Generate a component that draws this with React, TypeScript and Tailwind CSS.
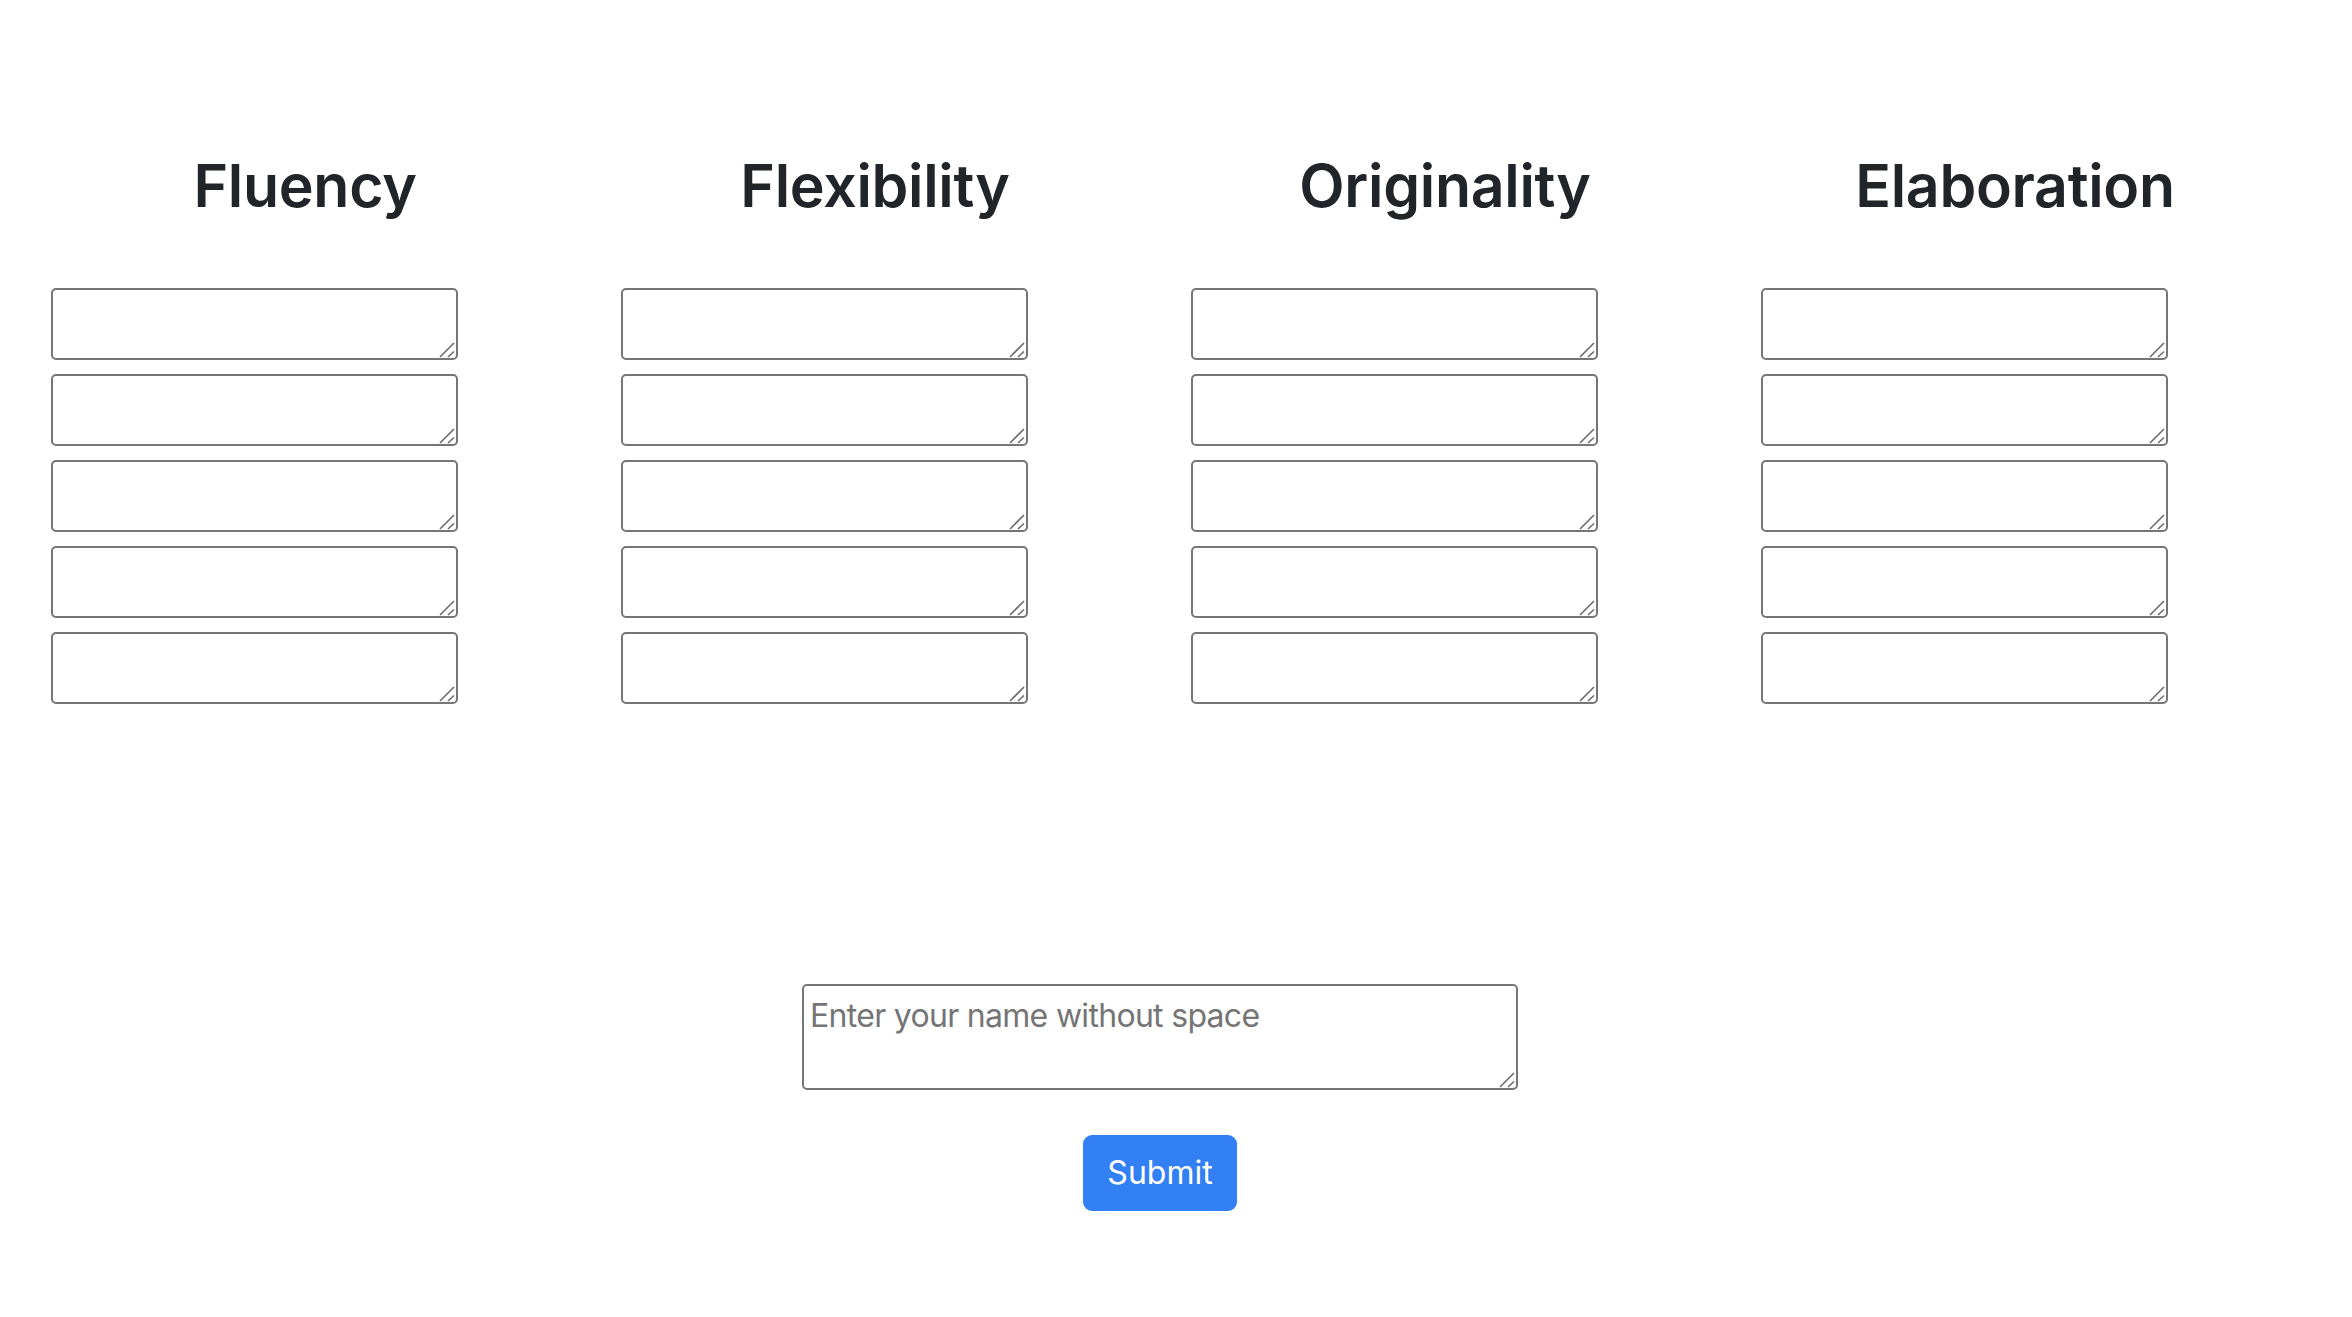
import React from "react";

const columns = ["Fluency", "Flexibility", "Originality", "Elaboration"];

function Grip() {
  return (
    <svg
      className="pointer-events-none absolute bottom-[2px] right-[3px] h-[16px] w-[16px]"
      viewBox="0 0 16 16"
      fill="none"
      stroke="#6b6b6b"
      strokeWidth="1.6"
    >
      <line x1="1" y1="15" x2="15" y2="1" />
      <line x1="9" y1="15" x2="15" y2="9.5" />
    </svg>
  );
}

export default function App() {
  return (
    <div className="min-h-[1317px] w-[2320px] bg-white px-[20px] font-['Inter','Liberation_Sans',sans-serif] text-[#212529]">
      <div className="grid grid-cols-4 pt-[151px]">
        {columns.map((c) => (
          <div key={c} className="flex flex-col">
            <h3 className="text-center text-[59px] font-semibold leading-[1.2] tracking-[-0.3px]">{c}</h3>
            <div className="mt-[66px] flex flex-col items-start gap-[14px] pl-[31px]">
              {[0, 1, 2, 3, 4].map((i) => (
                <div key={i} className="relative h-[72px] w-[407px]">
                  <textarea className="block h-full w-full resize-none rounded-[5px] border-2 border-[#767676] bg-white" />
                  <Grip />
                </div>
              ))}
            </div>
          </div>
        ))}
      </div>
      <div className="mt-[280px] flex flex-col items-center">
        <div className="relative h-[106px] w-[716px]">
          <textarea
            placeholder="Enter your name without space"
            className="block h-full w-full resize-none rounded-[5px] border-2 border-[#767676] bg-white p-[6px] text-[32px] tracking-[-0.7px] placeholder:text-[#757575]"
          />
          <Grip />
        </div>
        <button className="mt-[45px] flex h-[76px] w-[154px] items-center justify-center rounded-[9px] bg-[#3280f4] text-[32px] text-white">
          Submit
        </button>
      </div>
    </div>
  );
}
